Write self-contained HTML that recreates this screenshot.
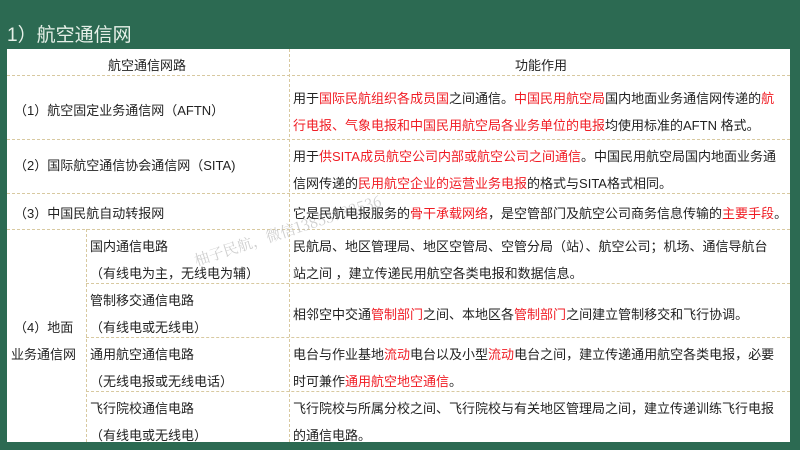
<!DOCTYPE html>
<html><head><meta charset="utf-8"><style>
body{margin:0;width:800px;height:450px;background:#2c6a52;position:relative;overflow:hidden;font-family:"Liberation Sans","Noto Sans CJK SC",sans-serif;}
.t{position:absolute;font-size:13px;line-height:16px;color:#222;white-space:nowrap;}
.r{color:#f01c24;}
.tbl{position:absolute;left:7px;top:49px;width:783px;height:393px;background:#fff;}
.h{position:absolute;border-top:1px dashed #d8c9a0;}
.v{position:absolute;border-left:1px dashed #d8c9a0;}
.title{position:absolute;left:7px;top:20px;font-size:19px;color:#e6f0e8;}
.wm{position:absolute;left:190px;top:220px;font-size:15px;color:#bbb;transform:rotate(-18deg);font-family:"Noto Serif CJK SC",serif;opacity:.7}
</style></head><body>
<div class="title">1）航空通信网</div>
<div class="tbl"></div>
<div class="h" style="left:7px;width:783px;top:75px"></div>
<div class="h" style="left:7px;width:783px;top:139px"></div>
<div class="h" style="left:7px;width:783px;top:193px"></div>
<div class="h" style="left:7px;width:783px;top:229px"></div>
<div class="h" style="left:86px;width:704px;top:283px"></div>
<div class="h" style="left:86px;width:704px;top:337px"></div>
<div class="h" style="left:86px;width:704px;top:391px"></div>
<div class="v" style="left:289px;top:49px;height:393px"></div>
<div class="v" style="left:86px;top:229px;height:213px"></div>
<div class="wm">柚子民航，微信13853782536</div>

<div class="t" style="left:108px;top:58px">航空通信网路</div>
<div class="t" style="left:515px;top:58px">功能作用</div>

<div class="t" style="left:14px;top:103px">（1）航空固定业务通信网（AFTN）</div>
<div class="t" style="left:293px;top:91px">用于<span class="r">国际民航组织各成员国</span>之间通信。<span class="r">中国民用航空局</span>国内地面业务通信网传递的<span class="r">航</span></div>
<div class="t" style="left:293px;top:118px"><span class="r">行电报、气象电报和中国民用航空局各业务单位的电报</span>均使用标准的AFTN 格式。</div>

<div class="t" style="left:14px;top:158px">（2）国际航空通信协会通信网（SITA)</div>
<div class="t" style="left:293px;top:149px">用于<span class="r">供SITA成员航空公司内部或航空公司之间通信</span>。中国民用航空局国内地面业务通</div>
<div class="t" style="left:293px;top:176px">信网传递的<span class="r">民用航空企业的运营业务电报</span>的格式与SITA格式相同。</div>

<div class="t" style="left:14px;top:206px">（3）中国民航自动转报网</div>
<div class="t" style="left:293px;top:206px">它是民航电报服务的<span class="r">骨干承载网络</span>，是空管部门及航空公司商务信息传输的<span class="r">主要手段</span>。</div>

<div class="t" style="left:90px;top:239px">国内通信电路</div>
<div class="t" style="left:90px;top:266px">（有线电为主，无线电为辅）</div>
<div class="t" style="left:293px;top:239px">民航局、地区管理局、地区空管局、空管分局（站）、航空公司；机场、通信导航台</div>
<div class="t" style="left:293px;top:266px">站之间 ，建立传递民用航空各类电报和数据信息。</div>

<div class="t" style="left:90px;top:293px">管制移交通信电路</div>
<div class="t" style="left:90px;top:320px">（有线电或无线电）</div>
<div class="t" style="left:293px;top:307px">相邻空中交通<span class="r">管制部门</span>之间、本地区各<span class="r">管制部门</span>之间建立管制移交和飞行协调。</div>

<div class="t" style="left:14px;top:320px">（4）地面</div>
<div class="t" style="left:11px;top:347px">业务通信网</div>

<div class="t" style="left:90px;top:347px">通用航空通信电路</div>
<div class="t" style="left:90px;top:374px">（无线电报或无线电话）</div>
<div class="t" style="left:293px;top:347px">电台与作业基地<span class="r">流动</span>电台以及小型<span class="r">流动</span>电台之间，建立传递通用航空各类电报，必要</div>
<div class="t" style="left:293px;top:374px">时可兼作<span class="r">通用航空地空通信</span>。</div>

<div class="t" style="left:90px;top:401px">飞行院校通信电路</div>
<div class="t" style="left:90px;top:428px">（有线电或无线电）</div>
<div class="t" style="left:293px;top:401px">飞行院校与所属分校之间、飞行院校与有关地区管理局之间，建立传递训练飞行电报</div>
<div class="t" style="left:293px;top:428px">的通信电路。</div>
</body></html>
